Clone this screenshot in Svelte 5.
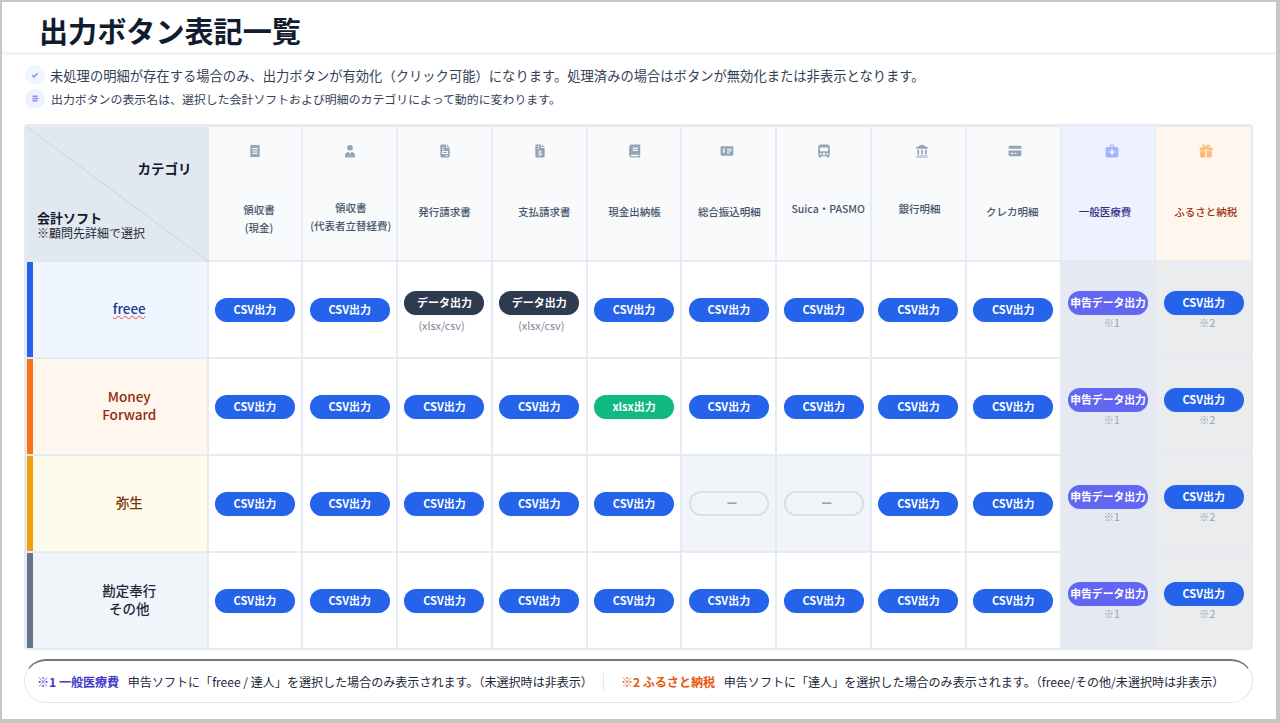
<script>
  const columns = [
    { icon: 'receipt', lines: ['領収書', '(現金)'], dx: 8, dy: 20, ix: 0 },
    { icon: 'user', lines: ['領収書', '(代表者立替経費)'], dx: 2, dy: 16, ix: 0 },
    { icon: 'file', lines: ['発行請求書'], dx: 0, dy: 6, ix: 1 },
    { icon: 'dollar', lines: ['支払請求書'], dx: 10, dy: 5, ix: 1 },
    { icon: 'book', lines: ['現金出納帳'], dx: 1, dy: 5, ix: 1 },
    { icon: 'check', lines: ['総合振込明細'], dx: 1, dy: 5, ix: -3 },
    { icon: 'bus', lines: ['Suica・PASMO'], dx: 9, dy: 0, ix: 1 },
    { icon: 'bank', lines: ['銀行明細'], dx: 2, dy: 0, ix: 7 },
    { icon: 'card', lines: ['クレカ明細'], dx: -2, dy: 5, ix: 3 },
    { icon: 'medical', lines: ['一般医療費'], dx: -6, dy: 5, ix: 7, kind: 'med' },
    { icon: 'gift', lines: ['ふるさと納税'], dx: 4, dy: 5, ix: 5, kind: 'furu' }
  ];

  const csv = { label: 'CSV出力' };
  const data = { label: 'データ出力', tone: 'dark', note: '(xlsx/csv)', noteCls: 'fmt' };
  const dataB = { ...data, noteCls: 'fmt right' };
  const xlsx = { label: 'xlsx出力', tone: 'green' };
  const none = { label: 'ー', tone: 'off' };
  const med = { label: '申告データ出力', tone: 'purple', note: '※1', noteCls: 'mark' };
  const furu = { label: 'CSV出力', note: '※2', noteCls: 'mark' };

  const rows = [
    { name: ['freee'], cls: 'freee', cells: [csv, csv, data, dataB, csv, csv, csv, csv, csv, med, furu] },
    { name: ['Money', 'Forward'], cls: 'mf', cells: [csv, csv, csv, csv, xlsx, csv, csv, csv, csv, med, furu] },
    { name: ['弥生'], cls: 'yayoi', cells: [csv, csv, csv, csv, csv, none, none, csv, csv, med, furu] },
    { name: ['勘定奉行', 'その他'], cls: 'other', cells: [csv, csv, csv, csv, csv, csv, csv, csv, csv, med, furu] }
  ];
</script>

<div class="page">
  <header class="top"><h1>出力ボタン表記一覧</h1></header>

  <section class="notes">
    <p class="note first">
      <span class="badge">
        <svg viewBox="0 0 24 24" width="8" height="8"><path d="M4 13l5 5L20 7" fill="none" stroke="#6f8fee" stroke-width="4"/></svg>
      </span>
      未処理の明細が存在する場合のみ、出力ボタンが有効化（クリック可能）になります。処理済みの場合はボタンが無効化または非表示となります。
    </p>
    <p class="note second">
      <span class="badge violet">
        <svg viewBox="0 0 24 24" width="9" height="9"><path d="M4 4h13v4H4zM4 10h16v4H4zM4 16h13v4H4z" fill="#8b8cf5"/></svg>
      </span>
      出力ボタンの表示名は、選択した会計ソフトおよび明細のカテゴリによって動的に変わります。
    </p>
  </section>

  <section class="matrix">
    <div class="corner">
      <span class="cat">カテゴリ</span>
      <span class="soft"><b>会計ソフト</b><br />※顧問先詳細で選択</span>
    </div>

    {#each columns as col}
      <div class="head {col.kind ?? ''}">
        <svg class="icon" viewBox="0 0 24 24" width="14" height="14" style="margin-left:{col.ix}px">
          {#if col.icon === 'receipt'}
            <path fill-rule="evenodd" d="M4 1l2 1.500L8 1l2 1.500L12 1l2 1.500L16 1l2 1.500L20 1v22l-2-1.500L16 23l-2-1.500L12 23l-2-1.500L8 23l-2-1.500L4 23zM7.500 7v2h9V7zM7.500 11v2h9v-2zM7.500 15v2h9v-2z"/>
          {:else if col.icon === 'user'}
            <circle cx="12" cy="6.500" r="4.800"/>
            <path d="M3.500 23v-3.500c0-3.500 2.500-6 6-6l1.200 2-1 7.500zM20.500 23v-3.500c0-3.500-2.500-6-6-6l-1.200 2 1 7.500zM10.800 16h2.400l.8 7h-4z"/>
          {:else if col.icon === 'file'}
            <path fill-rule="evenodd" d="M6 1h8v6h6v14a2 2 0 0 1-2 2H6a2 2 0 0 1-2-2V3a2 2 0 0 1 2-2zM15.500 1L20 5.500h-4.500zM7 5v1.600h4V5zM7 8.500v1.600h4V8.500zM7 12v5h10v-5zM9 13.600h6v1.800H9zM13 19.200v1.600h4v-1.600z"/>
          {:else if col.icon === 'dollar'}
            <path fill-rule="evenodd" d="M6 1h8v6h6v14a2 2 0 0 1-2 2H6a2 2 0 0 1-2-2V3a2 2 0 0 1 2-2zM15.500 1L20 5.500h-4.500zM7 4v1.600h4V4zM7 7.500v1.600h4V7.500zM11 10.500v1.300c-3 .4-3 4.200 0 4.400h2c.8 0 .8 1.300 0 1.300H9.500v1.600H11v1.400h2v-1.400c3-.4 3-4.200 0-4.400h-2c-.8 0-.8-1.300 0-1.300h3.500v-1.600H13v-1.300z"/>
          {:else if col.icon === 'book'}
            <path fill-rule="evenodd" d="M6 1h15v16.500l-1 1v2.500h1v2H6a4 4 0 0 1-4-4V5a4 4 0 0 1 4-4zM6 18.500a1.300 1.300 0 0 0 0 2.500h12v-2.500zM8 6v2h9V6zM8 10v2h9v-2z"/>
          {:else if col.icon === 'check'}
            <path fill-rule="evenodd" d="M3 4h18a2 2 0 0 1 2 2v12a2 2 0 0 1-2 2H3a2 2 0 0 1-2-2V6a2 2 0 0 1 2-2zM6 7v1c-2 .4-2 3 0 3.500h1.500v1H4.500V14H6v1.500h1.500V14c2-.4 2-3 0-3.500H6v-1h3V8H7.500V7zM12 8v1.800h8V8zM12 11.200V13h8v-1.800zM12 14.400v1.800h5v-1.800z"/>
          {:else if col.icon === 'bus'}
            <path fill-rule="evenodd" d="M7 1h10a5 5 0 0 1 5 5v13a2 2 0 0 1-1.500 1.900V23h-4v-2h-9v2h-4v-2.100A2 2 0 0 1 2 19V6a5 5 0 0 1 5-5zM5 6v6.500h14V6zM6 15.500a1.700 1.700 0 1 0 0 3.400 1.700 1.700 0 0 0 0-3.400zM18 15.500a1.700 1.700 0 1 0 0 3.400 1.700 1.700 0 0 0 0-3.400zM11 14.500v1.800H9.200v2H11v1.500h2v-1.500h1.800v-2H13v-1.800z"/>
          {:else if col.icon === 'bank'}
            <path d="M12 1L1.500 6.500V8h21V6.500zM4 10v8h3v-8zM10.500 10v8h3v-8zM17 10v8h3v-8zM3 19.500h18V21H3zM1.500 21.800h21V23h-21z"/>
          {:else if col.icon === 'card'}
            <path fill-rule="evenodd" d="M3.500 3h17A2.500 2.500 0 0 1 23 5.500V8H1V5.500A2.500 2.500 0 0 1 3.500 3zM1 11h22v7.500a2.500 2.500 0 0 1-2.500 2.500h-17A2.500 2.500 0 0 1 1 18.500zM4.500 15v2h5v-2zM11.500 15v2h3v-2z"/>
          {:else if col.icon === 'medical'}
            <path fill-rule="evenodd" d="M8 5V3.500A2.500 2.500 0 0 1 10.500 1h3A2.500 2.500 0 0 1 16 3.500V5h4a3 3 0 0 1 3 3v12a3 3 0 0 1-3 3H4a3 3 0 0 1-3-3V8a3 3 0 0 1 3-3zM10 5h4V3h-4zM10.500 9.500v3h-3v3h3v3h3v-3h3v-3h-3v-3z"/>
          {:else}
            <path fill-rule="evenodd" d="M3 6h7.300C8.500 6 5 6 5 3.600 5 1.800 6.500 1 8 1c2 0 3.300 1.800 4 3.500C12.700 2.800 14 1 16 1c1.500 0 3 .8 3 2.600C19 6 15.500 6 13.700 6H21a2 2 0 0 1 2 2v3H13.200v-3h-2.400v3H1V8a2 2 0 0 1 2-2zM8 3c-.8 0-1 .3-1 .7C7 4.500 8.500 5 10 5 9.500 4 9 3 8 3zM16 3c-1 0-1.500 1-2 2 1.500 0 3-.5 3-1.300 0-.4-.2-.7-1-.7zM2 12.500h8.800V23H4a2 2 0 0 1-2-2zM13.200 12.500H22V21a2 2 0 0 1-2 2h-6.800z"/>
          {/if}
        </svg>
        <div class="label" style="margin-left:{col.dx}px;margin-top:{col.dy}px">
          {#each col.lines as line}<span>{line}</span>{/each}
        </div>
      </div>
    {/each}

    {#each rows as row}
      <div class="name {row.cls}">
        <div>{#each row.name as line}<span>{line}</span>{/each}</div>
      </div>
      {#each row.cells as cell, i}
        <div class="cell {columns[i].kind ?? ''}" class:blank={cell.tone === 'off'}>
          <span class="btn {cell.tone ?? ''}">{cell.label}</span>
          {#if cell.note}<small class={cell.noteCls}>{cell.note}</small>{/if}
        </div>
      {/each}
    {/each}
  </section>

  <footer class="legend">
    <span class="item"><b class="violet-t">※1 一般医療費</b> 申告ソフトに「freee / 達人」を選択した場合のみ表示されます。（未選択時は非表示）</span>
    <i class="sep"></i>
    <span class="item"><b class="orange-t">※2 ふるさと納税</b> 申告ソフトに「達人」を選択した場合のみ表示されます。（freee/その他/未選択時は非表示）</span>
  </footer>
</div>

<style>
  :global(body) { margin: 0; background: #fff; }
  .page {
    box-sizing: border-box;
    width: 1280px;
    height: 723px;
    border-style: solid;
    border-color: #c6c6c6;
    border-width: 2px 4px 4px 2px;
    font-family: "Noto Sans CJK JP", "Noto Sans", sans-serif;
    color: #1e293b;
    overflow: hidden;
  }
  .top {
    box-sizing: border-box;
    height: 53px;
    border-bottom: 3px solid #f1f2f4;
    padding: 7px 0 0 37px;
    display: flex;
    align-items: center;
  }
  h1 { margin: 0; font-size: 29.100px; font-weight: 700; color: #111c2e; line-height: 1; }
  .notes { padding: 8px 0 0 23px; height: 69px; box-sizing: border-box; }
  .note { margin: 0; display: flex; align-items: center; gap: 5px; height: 24px; color: #334155; }
  .first { font-size: 13.3px; }
  .second { font-size: 11.920px; gap: 6px; height: 23px; }
  .badge {
    width: 20px; height: 20px; border-radius: 50%;
    background: #eff6ff; display: flex; align-items: center; justify-content: center; flex: none;
  }
  .badge.violet { background: #eef2ff; }

  .matrix {
    box-sizing: border-box;
    width: 1229px;
    margin-left: 22px;
    display: grid;
    grid-template-columns: 179.500px repeat(10, 92.800px) 1fr;
    grid-template-rows: 133px repeat(4, 95px);
    gap: 2px;
    padding: 3px 2px 2px 3px;
    background: #e6ebf3;
    border-radius: 4px;
  }
  .corner {
    position: relative;
    background:
      linear-gradient(to top right, transparent calc(50% - 0.6px), #c9ced6 50%, transparent calc(50% + 0.6px)),
      #e2e8f0;
    margin: 0 -2px -2px 0;
  }
  .cat { position: absolute; right: 17px; top: 31px; font-size: 13.5px; font-weight: 700; color: #0f172a; }
  .soft { position: absolute; left: 10px; top: 83px; font-size: 12px; line-height: 15px; color: #1e293b; }
  .soft b { font-size: 13px; color: #0f172a; }

  .head {
    background: #f8fafc;
    display: flex;
    flex-direction: column;
    align-items: center;
    padding-top: 17px;
    box-sizing: border-box;
  }
  .head.med { background: #eef2ff; }
  .head.furu { background: #fff7ed; }
  .icon { fill: #94a3b8; flex: none; }
  .med .icon { fill: #a5b4fc; }
  .furu .icon { fill: #fdba74; }
  .label {
    height: 102px;
    display: flex;
    flex-direction: column;
    justify-content: center;
    align-items: center;
    font-size: 10.5px;
    font-weight: 500;
    line-height: 18px;
    color: #475569;
    white-space: nowrap;
  }
  .head.med .label { color: #312e81; }
  .head.furu .label { color: #9a3412; }

  .name {
    position: relative;
    display: flex;
    align-items: center;
    justify-content: center;
    text-align: center;
    font-size: 13.500px;
    font-weight: 500;
    line-height: 18px;
    padding: 0 0 4px 25px;
  }
  .name span { display: block; }
  .name::before { content: ""; position: absolute; left: 0; top: 0; bottom: 0; width: 6px; }
  .freee { background: #eff6ff; color: #1e3a8a; }
  .freee::before { background: #2563eb; }
  .freee span { text-decoration: underline wavy #ef4444 1px; text-underline-offset: 1px; }
  .mf { background: #fff7ed; color: #922c0e; }
  .mf::before { background: #f97316; }
  .yayoi { background: #fffbeb; color: #78350f; }
  .yayoi::before { background: #f59e0b; }
  .other { background: #f1f5f9; color: #1e293b; }
  .other::before { background: #64748b; }

  .cell {
    background: #fff;
    display: flex;
    flex-direction: column;
    align-items: center;
    justify-content: center;
  }
  .cell.med { background: #e4e9f2; }
  .cell.furu { background: #eaecee; }
  .cell.blank { background: #f1f5f9; }
  .btn {
    box-sizing: border-box;
    width: 80px;
    height: 24px;
    padding-bottom: 2px;
    border-radius: 12px;
    background: #2563eb;
    color: #fff;
    font-size: 11px;
    font-weight: 700;
    display: flex;
    align-items: center;
    justify-content: center;
    white-space: nowrap;
    flex: none;
    box-shadow: 0 0 1px #bfdbfe;
  }
  .btn.dark { background: #2d3a4f; }
  .btn.green { background: #10b981; }
  .btn.purple { background: #6366f1; font-size: 10.800px; }
  .btn.off {
    background: #f1f5f9;
    border: 2px solid #dbe0e8;
    color: #94a3b8;
    box-shadow: none;
    font-size: 11px;
    height: 25px;
    padding-left: 6px;
  }
  small { font-size: 10.500px; line-height: 13px; height: 13px; color: #94a3b8; flex: none; }
  small.fmt { font-size: 10.800px; color: #7b8798; margin: 4.5px 6px -4px 0; }
  small.fmt.right { margin: 4.5px 0 -4px 4px; }
  small.mark { margin: 1.500px 0 -1px 7px; }

  .legend {
    box-sizing: border-box;
    width: 1229px;
    height: 44px;
    margin: 9px 0 0 22px;
    border: 1.500px solid #e2e8f0;
    border-top: 2px solid #787878;
    border-radius: 22px;
    display: flex;
    align-items: center;
    gap: 10px;
    padding-left: 12px;
    font-size: 12.060px;
    color: #1e293b;
    white-space: nowrap;
  }
  .legend b { font-weight: 700; margin-right: 6px; }
  .violet-t { color: #4338ca; }
  .orange-t { color: #ea580c; }
  .sep { width: 1px; height: 17px; background: #e2e8f0; flex: none; margin-right: 7px; }
</style>
